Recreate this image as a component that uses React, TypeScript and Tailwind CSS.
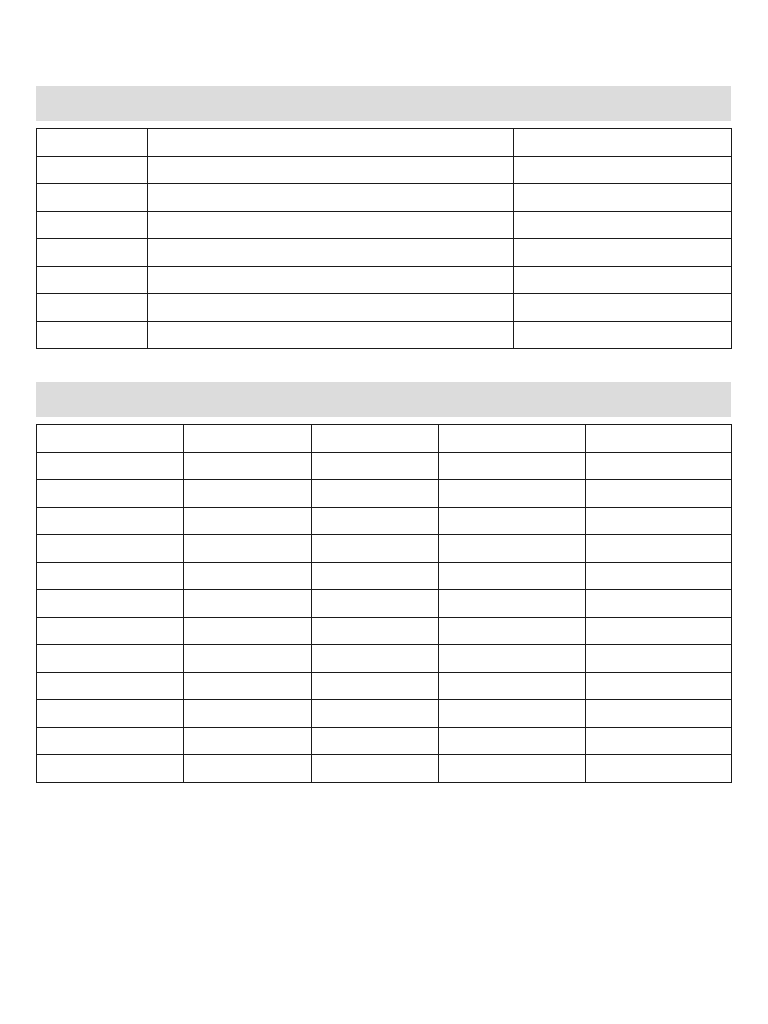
const firstCols = ["w-[111px]", "w-[366px]", "w-[218px]"];
const secondCols = ["w-[147px]", "w-[128px]", "w-[127px]", "w-[147px]", "w-[146px]"];

function Grid({ cols, rows }: { cols: string[]; rows: number }) {
  return (
    <table className="w-full table-fixed border-collapse">
      <colgroup>
        {cols.map((c, i) => (
          <col key={i} className={c} />
        ))}
      </colgroup>
      <tbody>
        {Array.from({ length: rows }).map((_, r) => (
          <tr key={r} className="h-[27.5px]">
            {cols.map((_, c) => (
              <td key={c} className="border border-[#1a1a1a] p-0"></td>
            ))}
          </tr>
        ))}
      </tbody>
    </table>
  );
}

export default function App() {
  return (
    <div className="min-h-screen bg-white pl-[36px] pr-[37px] pt-[86px] font-['Liberation_Sans',sans-serif]">
      <div className="h-[35px] bg-[#dcdcdc]"></div>
      <div className="mt-[7px]">
        <Grid cols={firstCols} rows={8} />
      </div>
      <div className="mt-[33px] h-[35px] bg-[#dcdcdc]"></div>
      <div className="mt-[7px]">
        <Grid cols={secondCols} rows={13} />
      </div>
    </div>
  );
}
